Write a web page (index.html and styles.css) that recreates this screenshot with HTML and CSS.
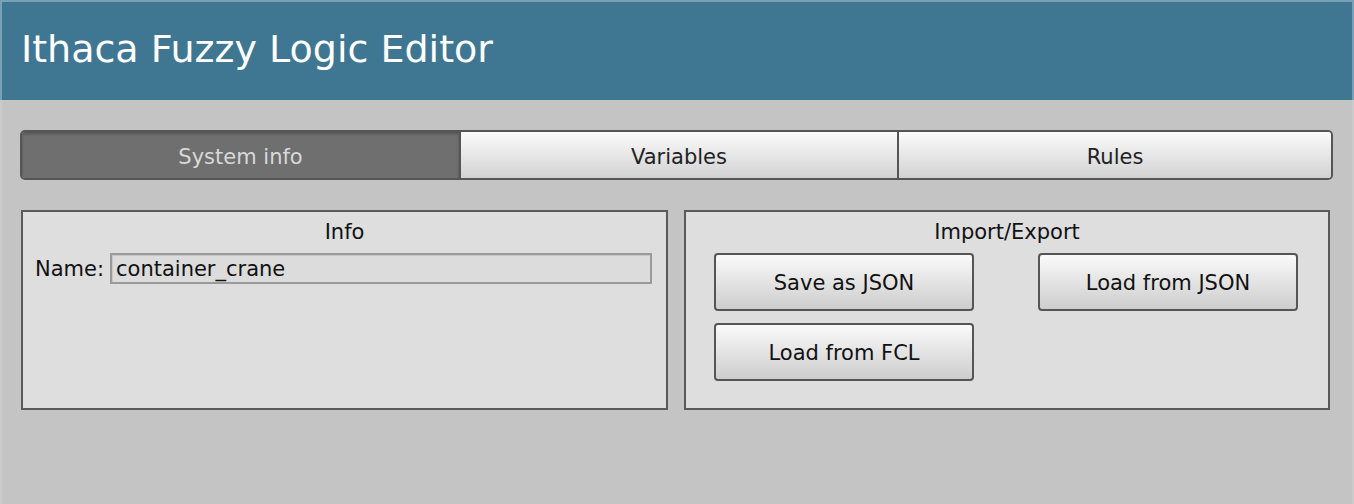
FILE: index.html
```html
<!DOCTYPE html>
<html>
<head>
<meta charset="utf-8">
<link rel="stylesheet" href="styles.css">
</head>
<body>
<div class="app">
  <header class="header">Ithaca Fuzzy Logic Editor</header>
  <main class="main">
    <nav class="tabs">
      <div class="tab active">System info</div>
      <div class="tab">Variables</div>
      <div class="tab">Rules</div>
    </nav>
    <div class="panels">
      <section class="panel info">
        <div class="panel-title">Info</div>
        <div class="row">
          <label class="lbl">Name:</label>
          <div class="field">container_crane</div>
        </div>
      </section>
      <section class="panel io">
        <div class="panel-title">Import/Export</div>
        <div class="btn-grid">
          <button class="btn">Save as JSON</button>
          <button class="btn">Load from JSON</button>
          <button class="btn">Load from FCL</button>
        </div>
      </section>
    </div>
  </main>
</div>
</body>
</html>
```
FILE: styles.css
```css
* { box-sizing: border-box; }
html, body { margin: 0; padding: 0; }
body {
  width: 1354px;
  height: 504px;
  overflow: hidden;
  font-family: "DejaVu Sans", "Liberation Sans", sans-serif;
  background: #c4c4c4;
}
.app {
  height: 504px;
  display: flex;
  flex-direction: column;
  border-left: 2px solid #cbcbcb;
  border-right: 2px solid #cbcbcb;
}
.header {
  height: 100px;
  background: #3f7793;
  border-top: 2px solid #7aa0b6;
  border-left: 2px solid #7aa0b6;
  border-right: 2px solid #7aa0b6;
  margin: 0 -2px;
  color: #ffffff;
  font-size: 38px;
  padding-left: 19px;
  padding-bottom: 4px;
  display: flex;
  align-items: center;
}
.main {
  flex: 1;
  padding: 30px 19px 0 18px;
}
.tabs {
  display: grid;
  grid-template-columns: 437px 438px 1fr;
  height: 50px;
  border: 2px solid #555;
  border-radius: 5px;
  overflow: hidden;
}
.tab {
  display: flex;
  align-items: center;
  justify-content: center;
  padding-top: 3px;
  font-size: 21px;
  color: #222;
  background: linear-gradient(#fbfbfb, #d2d2d2);
  border-left: 2px solid #555;
}
.tab:first-child { border-left: none; }
.tab.active {
  background: #6f6f6f;
  color: #d8d8d8;
  box-shadow: inset 0 2px 3px rgba(0,0,0,0.25);
}
.panels {
  display: grid;
  grid-template-columns: 647px 646px;
  column-gap: 16px;
  margin-top: 30px;
  padding-left: 1px;
}
.panel {
  height: 200px;
  border: 2px solid #5a5a5a;
  background: #dedede;
}
.panel-title {
  text-align: center;
  font-size: 21px;
  color: #111;
  margin-top: 8px;
  line-height: 24px;
}
.row {
  display: flex;
  align-items: center;
  margin-top: 9px;
  padding-left: 12px;
}
.lbl {
  font-size: 21px;
  color: #111;
  width: 75px;
}
.field {
  width: 542px;
  height: 31px;
  border: 2px solid #9a9a9a;
  box-shadow: inset 1px 1px 0 #c8c8c8;
  background: #dcdcdc;
  font-size: 21px;
  color: #111;
  padding-left: 4px;
  display: flex;
  align-items: center;
}
.btn-grid {
  display: grid;
  grid-template-columns: 260px 260px;
  column-gap: 64px;
  row-gap: 12px;
  padding-left: 28px;
  margin-top: 9px;
}
.btn {
  height: 58px;
  border: 2px solid #555;
  border-radius: 4px;
  background: linear-gradient(#fafafa, #cdcdcd);
  font-family: "DejaVu Sans", "Liberation Sans", sans-serif;
  font-size: 21px;
  color: #111;
  padding: 2px 0 0 0;
}
```
